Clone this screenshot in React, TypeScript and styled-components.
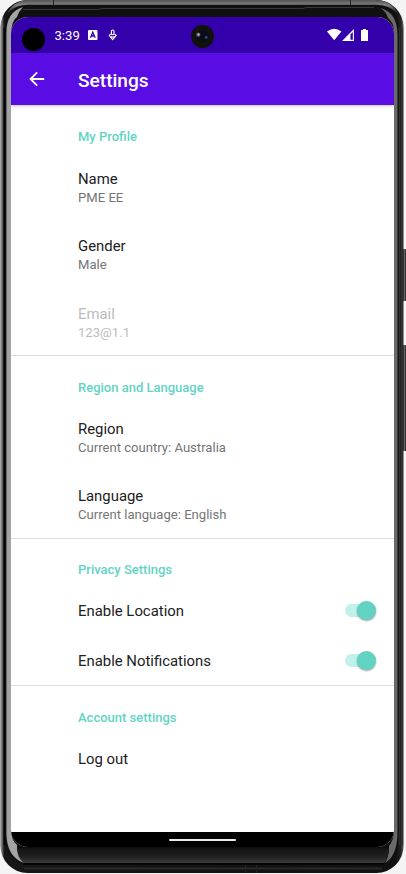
import React from 'react';
import styled, { createGlobalStyle } from 'styled-components';

const GlobalStyle = createGlobalStyle`
  * { box-sizing: border-box; }
  html, body { margin: 0; padding: 0; background: #f4f4f4; overflow: hidden; }
  body { font-family: Roboto, "Noto Sans", sans-serif; }
`;

const Device = styled.div`
  position: relative;
  width: 406px;
  height: 874px;
  padding: 17px 12px 27px 11px;
  overflow: hidden;
`;

const Bezel = styled.svg`
  position: absolute;
  inset: 0;
  display: block;
`;

const Screen = styled.div`
  position: relative;
  display: flex;
  flex-direction: column;
  width: 383px;
  height: 830px;
  border-radius: 17px;
  overflow: hidden;
  background: #fff;
`;

const StatusBar = styled.header`
  display: flex;
  align-items: center;
  flex: none;
  height: 36px;
  padding: 0 24px 0 11px;
  background: #3300ab;
  color: #fff;
`;

const CameraHole = styled.div`
  width: 23px;
  height: 23px;
  margin: 8px 9.5px 0 0;
  border-radius: 50%;
  background: #000;
`;

const Clock = styled.span`
  width: 33px;
  font-size: 13.1px;
  line-height: 37px;
`;

const StatusIcons = styled.div`
  display: flex;
  align-items: center;
  height: 36px;
`;

const Signals = styled(StatusIcons)`
  margin-left: auto;
`;

const FrontCamera = styled.svg`
  position: absolute;
  left: 180px;
  top: 8px;
`;

const AppBar = styled.div`
  position: relative;
  display: flex;
  align-items: center;
  flex: none;
  height: 52px;
  padding-left: 17px;
  background: #590de4;
  color: #fff;
  box-shadow: 0 1px 3px rgba(0, 0, 0, 0.25);
`;

const BackButton = styled.button`
  display: flex;
  width: 50px;
  padding: 0;
  border: 0;
  background: none;
  color: inherit;
`;

const Title = styled.h1`
  margin: 3px 0 0;
  font-size: 19.1px;
  line-height: 24px;
  font-weight: 500;
`;

const Content = styled.main`
  flex: 1;
  min-height: 0;
`;

const Heading = styled.h2`
  height: 24px;
  margin: 0;
  padding-left: 67px;
  color: #62d4c3;
  font-size: 13px;
  line-height: 18px;
  font-weight: 500;
`;

const Section = styled.section<{ $gap: number }>`
  padding-top: ${(p) => p.$gap}px;
  & + & { border-top: 1px solid #dedede; }
  &:first-child { height: 250px; }
  &:first-child ${Heading} { height: 25px; }
`;

const Label = styled.div`
  color: #212121;
  font-size: 14.9px;
  line-height: 20px;
`;

const Summary = styled.div`
  color: #757575;
  font-size: 13.1px;
  line-height: 18px;
`;

const Row = styled.div<{ $disabled?: boolean; $compact?: boolean }>`
  display: flex;
  align-items: center;
  justify-content: space-between;
  height: ${(p) => (p.$compact ? 50 : 67.5)}px;
  padding: 2px 18px 0 67px;
  ${Label}, ${Summary} {
    ${(p) => p.$disabled && 'color: #bcbcbc;'}
  }
`;

const Switch = styled.button`
  display: flex;
  align-items: center;
  justify-content: flex-end;
  width: 31px;
  height: 13px;
  margin-bottom: 2px;
  padding: 0;
  border: 0;
  border-radius: 7px;
  background: #c0f1ea;
`;

const Thumb = styled.span`
  flex: none;
  width: 19px;
  height: 19px;
  border-radius: 50%;
  background: #62d3c2;
  box-shadow: 0 1px 2px rgba(0, 0, 0, 0.38);
`;

const NavBar = styled.footer`
  display: flex;
  justify-content: center;
  flex: none;
  height: 15px;
  padding-top: 7px;
  background: #000;
`;

const HomeHandle = styled.div`
  width: 67px;
  height: 2px;
  border-radius: 1px;
  background: #eee8ef;
`;

const PhoneBezel = () => (
  <Bezel width="406" height="874" viewBox="0 0 406 874" aria-hidden="true">
    <defs>
      <linearGradient id="side" gradientUnits="userSpaceOnUse" x1="0" x2="404" y1="0" y2="0">
        <stop offset="0" stopColor="#444" />
        <stop offset=".003" stopColor="#858585" />
        <stop offset=".007" stopColor="#555" />
        <stop offset=".01" stopColor="#161616" />
        <stop offset=".98" stopColor="#111" />
        <stop offset=".993" stopColor="#252525" />
        <stop offset=".996" stopColor="#4d4d4d" />
        <stop offset="1" stopColor="#222" />
      </linearGradient>
      <linearGradient id="top" x1="0" x2="0" y1="0" y2="1">
        <stop offset="0" stopColor="#555" />
        <stop offset=".35" stopColor="#808080" />
        <stop offset="1" stopColor="#222" />
      </linearGradient>
      <linearGradient id="bottom" x1="0" x2="0" y1="0" y2="1">
        <stop offset="0" stopColor="#111" />
        <stop offset=".6" stopColor="#202020" />
        <stop offset="1" stopColor="#3b3b3b" />
      </linearGradient>
      <linearGradient id="sheen" gradientUnits="userSpaceOnUse" x1="6" x2="11" y1="0" y2="0">
        <stop offset="0" stopColor="#8b8b8b" />
        <stop offset=".4" stopColor="#a3a3a3" />
        <stop offset="1" stopColor="#a3a3a3" />
      </linearGradient>
    </defs>
    <rect x="403" y="249" width="3" height="52" fill="#333" />
    <rect x="403" y="345" width="3" height="106" fill="#333" />
    <path d="M404.5 249v52M404.5 345v106" stroke="#666" />
    <rect x=".5" y="0" width="403" height="873" rx="27" fill="url(#side)" />
    <path d="M7 14Q13 1 28 0H376Q392 1 398 14Q390 5 376 4.8H28Q14 5 7 14Z" fill="url(#top)" />
    <rect x="5.5" y="5" width="393" height="859" rx="22" fill="#101010" />
    <path d="M23 9.5H98L102 8.5H303L306 7.5H374" fill="none" stroke="#373737" />
    <path d="M23 7Q6 12 6.3 34V834Q7 857 24 863Q17 856 17 845Q11 840 11 829V33Q12 20 17 17Q19 11 23 7Z" fill="url(#sheen)" />
    <path d="M380 8Q397 12 397.5 34V834Q397 856 385 863Q389 857 389 846Q394 840 394 829V33Q394 22 388 18Q386 11 380 8Z" fill="#696969" />
    <path d="M17 847H389Q389 858 384 863H24Q17 858 17 847Z" fill="url(#bottom)" />
    <path d="M17 847H389" stroke="#080808" />
    <path d="M23 864H384" stroke="#060606" strokeWidth="2" />
    <path d="M24 868.5H382" stroke="#282828" strokeWidth="2" />
    <path d="M53.5 0V5M350.5 0V5M245.5 865V873M256.5 865V873" stroke="#222" />
    <path d="M4.5 28V845" stroke="#050505" strokeWidth="2" />
    <path d="M399.5 28V845M402.5 28V845" stroke="#303030" />
  </Bezel>
);

const KeyboardIcon = () => (
  <svg width="10" height="10" viewBox="0 0 10 10">
    <rect x="0" width="9.5" height="10" rx="1" fill="#fff" />
    <path d="M2.5 7.8L4.8 2.3L7.1 7.8M3.4 6H6.2" fill="none" stroke="#3300ab" strokeWidth="1.3" />
  </svg>
);

const MicIcon = () => (
  <svg width="31" height="12" viewBox="0 0 31 12">
    <g fill="none" stroke="#fff" strokeWidth="1.1">
      <rect x="13.4" y="1" width="2.6" height="4.8" rx="1.3" />
      <path d="M12.8 4.8L11.2 6.6L14.7 10.6L18.2 6.6L16.6 4.8M12.9 7.3Q14.7 9 16.5 7.3" />
    </g>
  </svg>
);

const SignalIcons = () => (
  <svg width="43" height="14" viewBox="0 0 43 14">
    <path d="M0 3.6Q7.2-2 14.4 3.6L7.2 12.2Z" fill="#fff" />
    <path d="M15 13L26.9 1V13Z" fill="#fff" />
    <path d="M23.5 6.5L25.8 4V11.8H23.5Z" fill="#3300ab" />
    <path d="M34 2H36V1H39V2H41V13H34Z" fill="#fff" />
  </svg>
);

const BackArrow = () => (
  <svg width="18" height="18" viewBox="0 0 18 18" fill="none" stroke="currentColor" strokeWidth="1.8">
    <path d="M16.2 9H3M9.2 2.3L2.5 9L9.2 15.7" />
  </svg>
);

type Item = { label: string; summary?: string; disabled?: boolean; toggle?: boolean };
const sections: { title: string; gap: number; items: Item[] }[] = [
  {
    title: 'My Profile', gap: 23,
    items: [
      { label: 'Name', summary: 'PME EE' },
      { label: 'Gender', summary: 'Male' },
      { label: 'Email', summary: '123@1.1', disabled: true },
    ],
  },
  {
    title: 'Region and Language', gap: 23,
    items: [
      { label: 'Region', summary: 'Current country: Australia' },
      { label: 'Language', summary: 'Current language: English' },
    ],
  },
  {
    title: 'Privacy Settings', gap: 22,
    items: [
      { label: 'Enable Location', toggle: true },
      { label: 'Enable Notifications', toggle: true },
    ],
  },
  { title: 'Account settings', gap: 22.5, items: [{ label: 'Log out' }] },
];

export default function App() {
  return (
    <>
      <GlobalStyle />
      <Device>
        <PhoneBezel />
        <Screen>
          <StatusBar>
            <CameraHole />
            <Clock>3:39</Clock>
            <StatusIcons>
              <KeyboardIcon />
              <MicIcon />
            </StatusIcons>
            <Signals><SignalIcons /></Signals>
            <FrontCamera width="23" height="23" viewBox="0 0 23 23">
              <circle cx="11.5" cy="11.5" r="11.5" fill="#111" />
              <circle cx="11.5" cy="11.5" r="6" fill="#0c0c17" />
              <circle cx="7.3" cy="9.8" r="2.2" fill="#50505a" />
              <circle cx="7.5" cy="9.6" r="1.1" fill="#c5c5ce" />
              <circle cx="15.2" cy="12.5" r="1.4" fill="#245578" />
            </FrontCamera>
          </StatusBar>
          <AppBar>
            <BackButton aria-label="Back"><BackArrow /></BackButton>
            <Title>Settings</Title>
          </AppBar>
          <Content>
            {sections.map((section) => (
              <Section key={section.title} $gap={section.gap}>
                <Heading>{section.title}</Heading>
                {section.items.map((item) => (
                  <Row key={item.label} $disabled={item.disabled} $compact={!item.summary}>
                    <div>
                      <Label>{item.label}</Label>
                      {item.summary && <Summary>{item.summary}</Summary>}
                    </div>
                    {item.toggle && (
                      <Switch role="switch" aria-checked="true" aria-label={item.label}><Thumb /></Switch>
                    )}
                  </Row>
                ))}
              </Section>
            ))}
          </Content>
          <NavBar><HomeHandle /></NavBar>
        </Screen>
      </Device>
    </>
  );
}
